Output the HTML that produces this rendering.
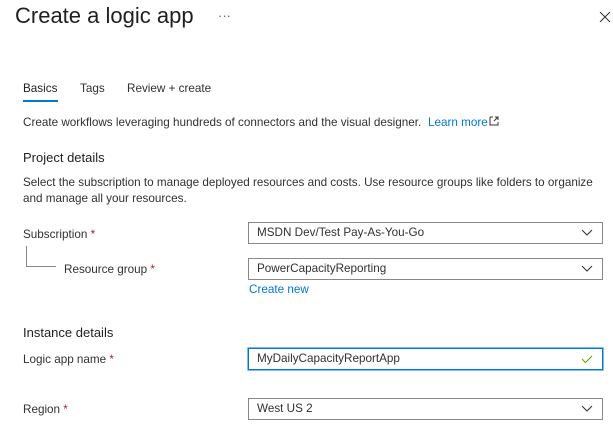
<!DOCTYPE html>
<html><head><style>
body{margin:0;width:613px;height:441px;background:#fff;font-family:"Liberation Sans",sans-serif;color:#323130;position:relative;overflow:hidden}
.a{position:absolute;white-space:nowrap}
.t{font-size:11.7px}
.req{color:#a4262c}
.dd{position:absolute;left:248px;width:345px;height:20px;border:1px solid #8a8886;font-size:11.7px;line-height:20px;padding-left:8px;box-sizing:content-box}
.dd svg{position:absolute;right:9px;top:6px}
.lnk{color:#0078d4}
</style></head><body>
<div class="a" style="left:15px;top:3px;font-size:22px;color:#201f1e">Create a logic app</div>
<div class="a" style="left:218px;top:8px;font-size:13px;color:#605e5c">···</div>
<svg class="a" style="left:599px;top:11px" width="12" height="12"><path d="M1 1L11 11M11 1L1 11" stroke="#323130" stroke-width="1"/></svg>
<div class="a t" style="left:23px;top:82px;color:#201f1e">Basics</div>
<div class="a" style="left:23px;top:100px;width:35px;height:2px;background:#0078d4"></div>
<div class="a t" style="left:80px;top:82px">Tags</div>
<div class="a t" style="left:127px;top:82px">Review + create</div>
<div class="a t" style="left:23px;top:116px">Create workflows leveraging hundreds of connectors and the visual designer.</div>
<div class="a t lnk" style="left:428px;top:116px">Learn more</div>
<svg class="a" style="left:489px;top:116px" width="10" height="10"><path d="M1 1H4M1 1V9H9V6M5 5L9 1M6 1H9V4" stroke="#323130" fill="none" stroke-width="1"/></svg>
<div class="a" style="left:23px;top:150px;font-size:13px;color:#201f1e">Project details</div>
<div class="a t" style="left:23px;top:175px;line-height:16px">Select the subscription to manage deployed resources and costs. Use resource groups like folders to organize<br>and manage all your resources.</div>
<div class="a t" style="left:23px;top:228px">Subscription <span class="req">*</span></div>
<div class="dd" style="top:222px">MSDN Dev/Test Pay-As-You-Go<svg width="12" height="8"><path d="M1 1L6 6L11 1" stroke="#323130" fill="none"/></svg></div>
<div class="a" style="left:26px;top:246px;width:29px;height:20px;border-left:1px solid #8a8886;border-bottom:1px solid #8a8886"></div>
<div class="a t" style="left:64px;top:263px">Resource group <span class="req">*</span></div>
<div class="dd" style="top:258px">PowerCapacityReporting<svg width="12" height="8"><path d="M1 1L6 6L11 1" stroke="#323130" fill="none"/></svg></div>
<div class="a t lnk" style="left:249px;top:283px">Create new</div>
<div class="a" style="left:23px;top:325px;font-size:13px;color:#201f1e">Instance details</div>
<div class="a t" style="left:23px;top:353px">Logic app name <span class="req">*</span></div>
<div class="dd" style="top:348px;border-color:#0078d4;box-shadow:0 0 0 0.5px #0078d4">MyDailyCapacityReportApp<svg width="12" height="9"><path d="M1 4L4.5 7.5L11 1" stroke="#57a300" fill="none"/></svg></div>
<div class="a t" style="left:23px;top:403px">Region <span class="req">*</span></div>
<div class="dd" style="top:398px">West US 2<svg width="12" height="8"><path d="M1 1L6 6L11 1" stroke="#323130" fill="none"/></svg></div>
</body></html>
